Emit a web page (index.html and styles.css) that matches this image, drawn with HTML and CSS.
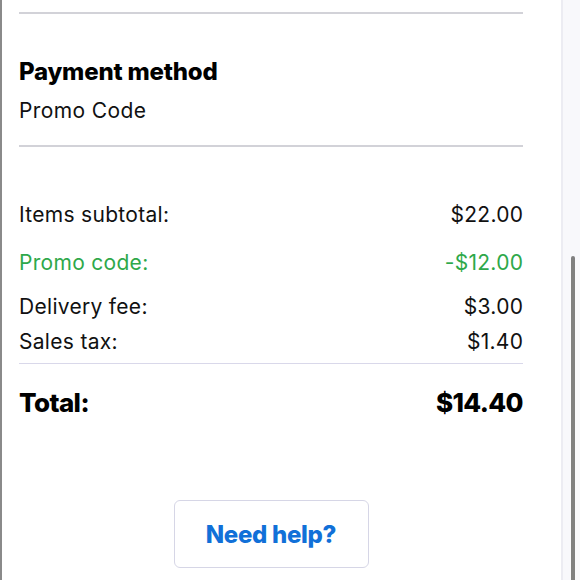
FILE: index.html
```html
<!DOCTYPE html>
<html lang="en">
<head>
<meta charset="utf-8">
<title>Order summary</title>
<link rel="stylesheet" href="styles.css">
</head>
<body>
<div class="page">
  <main class="panel">
    <div class="rule rule-top"></div>
    <section class="payment">
      <h2 class="heading">Payment method</h2>
      <p class="method">Promo Code</p>
    </section>
    <div class="rule rule-mid"></div>
    <section class="lines">
      <div class="row subtotal"><span>Items subtotal:</span><span>$22.00</span></div>
      <div class="row promo"><span>Promo code:</span><span>-$12.00</span></div>
      <div class="row delivery"><span>Delivery fee:</span><span>$3.00</span></div>
      <div class="row tax"><span>Sales tax:</span><span>$1.40</span></div>
    </section>
    <div class="rule-thin"></div>
    <div class="row total"><span>Total:</span><span>$14.40</span></div>
    <div class="help-wrap">
      <button class="help" type="button">Need help?</button>
    </div>
  </main>
  <aside class="gutter">
    <div class="thumb"></div>
  </aside>
</div>
</body>
</html>
```
FILE: styles.css
```css
html, body {
  margin: 0;
  padding: 0;
  background: #ffffff;
}
body {
  font-family: Inter, "Liberation Sans", sans-serif;
  color: #111111;
  width: 580px;
  height: 580px;
  overflow: hidden;
}
.page {
  display: flex;
  height: 580px;
}
.panel {
  flex: 0 0 auto;
  width: 504px;
  border-left: 2px solid #8a8a8a;
  padding: 0 38px 0 17px;
  background: #ffffff;
}
.rule {
  height: 2px;
  background: #d2d2d8;
}
.rule-top {
  margin-top: 12px;
}
.payment {
  padding-top: 44px;
}
.heading {
  margin: 0;
  font-size: 24px;
  font-weight: 800;
  line-height: 28px;
  color: #000000;
  letter-spacing: -0.2px;
}
.method {
  margin: 13px 0 0;
  font-size: 21px;
  line-height: 24px;
  letter-spacing: 0.4px;
}
.rule-mid {
  margin-top: 22px;
}
.lines {
  padding-top: 56px;
}
.row {
  display: flex;
  justify-content: space-between;
  font-size: 21px;
  line-height: 24px;
  letter-spacing: 0.3px;
}
.row span:last-child {
  margin-right: -0.3px;
}
.promo {
  margin-top: 24px;
  color: #2ea84a;
}
.delivery {
  margin-top: 20px;
}
.tax {
  margin-top: 11px;
}
.rule-thin {
  height: 1px;
  background: #d9d8ea;
  margin-top: 9px;
}
.total {
  margin-top: 23px;
  font-size: 26px;
  font-weight: 800;
  line-height: 32px;
  color: #000000;
  letter-spacing: -0.6px;
}
.total span:last-child {
  margin-right: 0;
}
.help-wrap {
  display: flex;
  justify-content: center;
  padding-top: 81px;
}
.help {
  width: 195px;
  height: 68px;
  border: 1px solid #d6d6e6;
  border-radius: 6px;
  background: #ffffff;
  color: #1170d8;
  font-family: Inter, "Liberation Sans", sans-serif;
  font-size: 24px;
  font-weight: 800;
  letter-spacing: -0.3px;
}
.gutter {
  position: relative;
  flex: 1;
  background: #f8f8fb;
  border-left: 2px solid #ececf2;
}
.thumb {
  position: absolute;
  left: 8px;
  top: 256px;
  width: 4px;
  height: 340px;
  border-radius: 2px;
  background: #808080;
}
```
